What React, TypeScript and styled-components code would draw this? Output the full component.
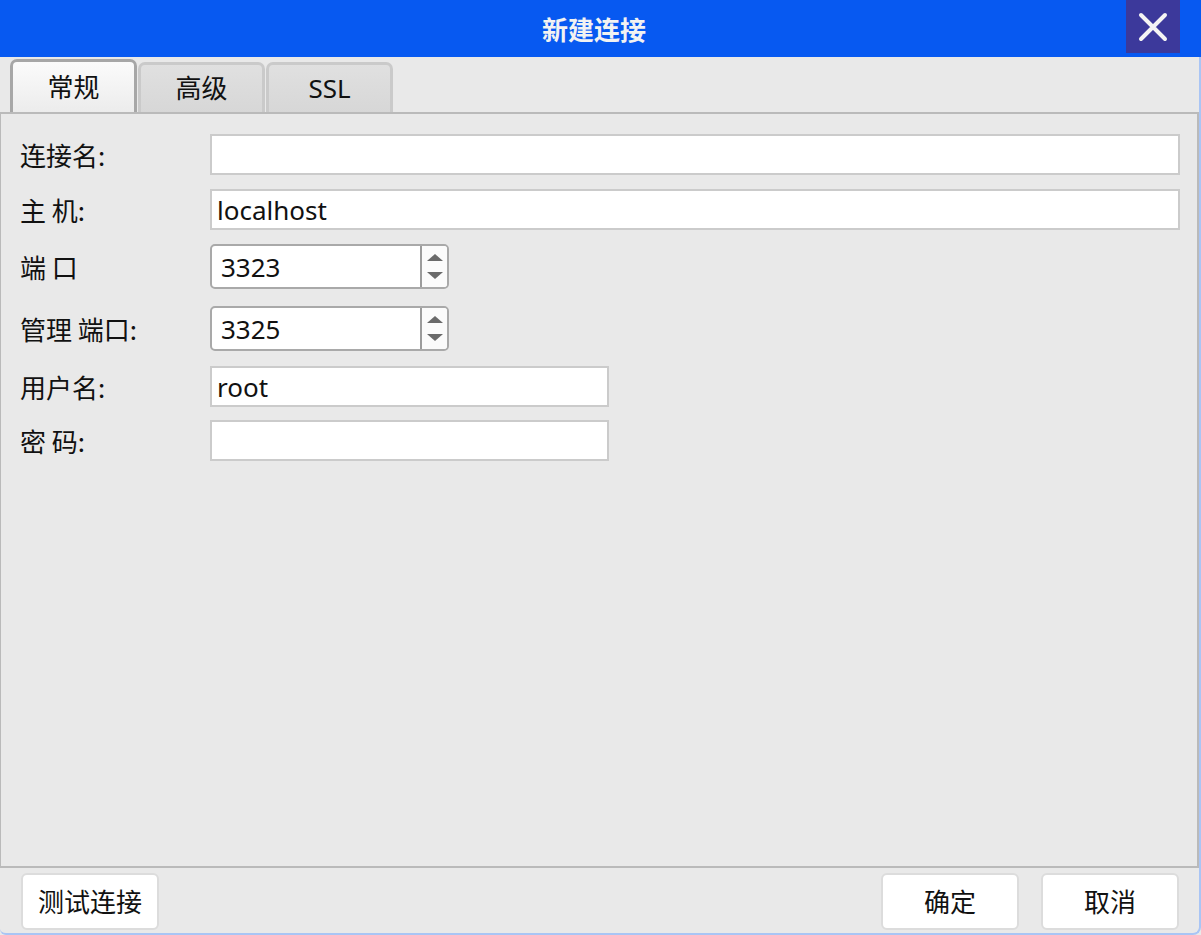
import React from "react";
import styled, { createGlobalStyle } from "styled-components";

const GlobalStyle = createGlobalStyle`
    html, body {
        margin: 0;
        padding: 0;
        background: #e9e9e9;
    }
    * {
        box-sizing: border-box;
    }
    body {
        font-family: "Noto Sans", "Noto Sans CJK SC", sans-serif;
    }
`;

const Window = styled.div`
    display: flex;
    flex-direction: column;
    width: 1201px;
    height: 935px;
    background: #e9e9e9;
    color: #111;
    font-size: 26px;
`;

const TitleBar = styled.div`
    position: relative;
    display: flex;
    align-items: center;
    justify-content: center;
    height: 57px;
    padding-right: 13px;
    flex-shrink: 0;
    background: #0759f1;
`;

const Title = styled.div`
    color: #f2f2f2;
    font-weight: bold;
    font-size: 26px;
    font-family: "Noto Sans CJK SC", sans-serif;
    line-height: 1.2;
`;

const CloseButton = styled.button`
    position: absolute;
    top: 0;
    right: 21px;
    width: 54px;
    height: 53px;
    border: none;
    padding: 0;
    background: #3c399b;
    display: flex;
    align-items: center;
    justify-content: center;
`;

const Body = styled.div`
    display: flex;
    flex-direction: column;
    flex: 1;
    border-right: 2px solid #a9c5f5;
    border-bottom: 2px solid #a9c5f5;
    border-bottom-right-radius: 8px;
    border-bottom-left-radius: 6px;
`;

const TabBar = styled.div`
    display: flex;
    align-items: flex-end;
    gap: 1px;
    height: 55px;
    padding-left: 10px;
    flex-shrink: 0;
`;

const Tab = styled.div<{ $active?: boolean }>`
    display: flex;
    align-items: center;
    justify-content: center;
    width: 127px;
    height: ${(p) => (p.$active ? "53px" : "50px")};
    padding-top: ${(p) => (p.$active ? "1px" : "0")};
    border: ${(p) => (p.$active ? "3px solid #a7a7a7" : "3px solid #cacaca")};
    border-bottom: none;
    border-radius: 7px 7px 0 0;
    background: ${(p) =>
        p.$active
            ? "linear-gradient(#fbfbfb, #ececec)"
            : "linear-gradient(#e0e0e0, #d7d7d7)"};
    font-family: "Noto Sans", "Noto Sans CJK SC", sans-serif;
    font-size: 26px;
    line-height: 1.2;
    color: #111;
`;

const Panel = styled.div`
    flex: 1;
    display: flex;
    flex-direction: column;
    gap: 15px;
    padding: 20px 17px 0 19px;
    border: 2px solid #bababa;
    border-left-width: 1px;
    background: #e9e9e9;
`;

const Row = styled.div<{ $gapTop?: number }>`
    display: flex;
    align-items: center;
    margin-top: ${(p) => p.$gapTop ?? 0}px;
`;

const Label = styled.label`
    width: 190px;
    flex-shrink: 0;
    font-family: "Noto Sans CJK SC", sans-serif;
    font-size: 26px;
    line-height: 1.2;
    color: #111;
    white-space: pre;
`;

const TextInput = styled.input<{ $width?: number }>`
    width: ${(p) => (p.$width ? `${p.$width}px` : "auto")};
    flex: ${(p) => (p.$width ? "none" : "1")};
    height: 41px;
    border: 2px solid #cbcbcb;
    border-radius: 0;
    background: #fff;
    padding: 0 5px;
    font-family: "Noto Sans", "Noto Sans CJK SC", sans-serif;
    font-size: 26px;
    color: #111;
    outline: none;
`;

const SpinBox = styled.div`
    display: flex;
    width: 239px;
    height: 45px;
    border: 2px solid #a9a9a9;
    border-radius: 5px;
    background: #fff;
    overflow: hidden;
`;

const SpinInput = styled.input`
    flex: 1;
    min-width: 0;
    border: none;
    background: transparent;
    padding: 0 9px;
    font-family: "Noto Sans", "Noto Sans CJK SC", sans-serif;
    font-size: 26px;
    color: #111;
    outline: none;
`;

const SpinButtons = styled.div`
    display: flex;
    flex-direction: column;
    align-items: center;
    justify-content: center;
    gap: 11px;
    width: 27px;
    border-left: 2px solid #9c9c9c;
    background: #fbfbfb;
`;

const Arrow = styled.div<{ $down?: boolean }>`
    width: 0;
    height: 0;
    border-left: 8px solid transparent;
    border-right: 8px solid transparent;
    ${(p) =>
        p.$down ? "border-top: 7px solid #6a6a6a;" : "border-bottom: 7px solid #6a6a6a;"}
`;

const Footer = styled.div`
    display: flex;
    align-items: flex-start;
    height: 65px;
    flex-shrink: 0;
    padding: 5px 20px 0 21px;
`;

const Spacer = styled.div`
    flex: 1;
`;

const Button = styled.button<{ $gapLeft?: number }>`
    width: 138px;
    height: 57px;
    margin-left: ${(p) => p.$gapLeft ?? 0}px;
    border: 2px solid #dcdcdc;
    border-radius: 6px;
    background: #fff;
    font-family: "Noto Sans CJK SC", sans-serif;
    font-size: 26px;
    line-height: 1.2;
    color: #111;
    padding: 0 0 2px;
`;

const CloseIcon: React.FC = () => (
    <svg width="30" height="30" viewBox="0 0 30 30">
        <path
            d="M3 3 L27 27 M27 3 L3 27"
            stroke="#f4f4f4"
            strokeWidth="4"
            strokeLinecap="round"
        />
    </svg>
);

const Spinner: React.FC<{ value: string }> = ({ value }) => (
    <SpinBox>
        <SpinInput defaultValue={value} />
        <SpinButtons>
            <Arrow />
            <Arrow $down />
        </SpinButtons>
    </SpinBox>
);

const App: React.FC = () => {
    return (
        <>
            <GlobalStyle />
            <Window>
                <TitleBar>
                    <Title>新建连接</Title>
                    <CloseButton>
                        <CloseIcon />
                    </CloseButton>
                </TitleBar>
                <Body>
                    <TabBar>
                        <Tab $active>常规</Tab>
                        <Tab>高级</Tab>
                        <Tab>SSL</Tab>
                    </TabBar>
                    <Panel>
                        <Row>
                            <Label>连接名:</Label>
                            <TextInput defaultValue="" />
                        </Row>
                        <Row $gapTop={-1}>
                            <Label>主 机:</Label>
                            <TextInput defaultValue="localhost" />
                        </Row>
                        <Row $gapTop={-1}>
                            <Label>端 口</Label>
                            <Spinner value="3323" />
                        </Row>
                        <Row $gapTop={2}>
                            <Label>管理 端口:</Label>
                            <Spinner value="3325" />
                        </Row>
                        <Row $gapTop={0}>
                            <Label>用户名:</Label>
                            <TextInput $width={399} defaultValue="root" />
                        </Row>
                        <Row $gapTop={-2}>
                            <Label>密 码:</Label>
                            <TextInput $width={399} type="password" defaultValue="" />
                        </Row>
                    </Panel>
                    <Footer>
                        <Button>测试连接</Button>
                        <Spacer />
                        <Button>确定</Button>
                        <Button $gapLeft={22}>取消</Button>
                    </Footer>
                </Body>
            </Window>
        </>
    );
};

export default App;
